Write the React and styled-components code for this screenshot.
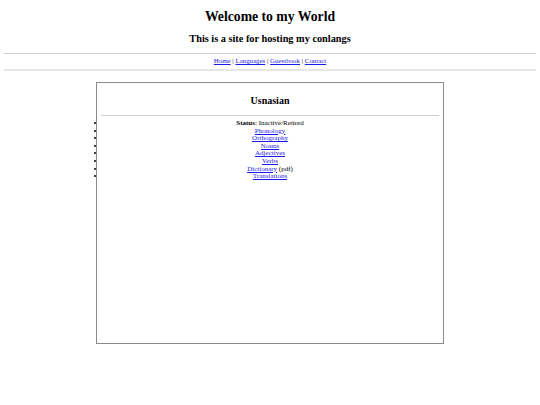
import React from "react";
import styled, { createGlobalStyle } from "styled-components";

const Global = createGlobalStyle`
  html, body { margin: 0; padding: 0; background: #fff; }
  body {
    margin: 4px;
    font-family: "Liberation Serif", "Times New Roman", serif;
    color: #000;
  }
`;

const Title = styled.h1`
  font-size: 13.7px;
  font-weight: bold;
  text-align: center;
  margin: 0;
  padding-top: 5px;
  line-height: 16px;
`;

const Subtitle = styled.h2`
  font-size: 10.3px;
  font-weight: bold;
  text-align: center;
  margin: 8px 0 0;
  line-height: 12px;
`;

const Rule = styled.hr`
  border: none;
  height: ${(p) => p.$thick}px;
  background: ${(p) => p.$color};
  margin: ${(p) => p.$mt}px 0 0;
`;

const Nav = styled.div`
  font-size: 6.9px;
  text-align: center;
  line-height: 8px;
  margin-top: 3px;
`;

const Link = styled.a`
  color: #1a1aee;
  text-decoration: underline;
`;

const Box = styled.div`
  width: 338px;
  height: 260px;
  margin: 11px auto 0;
  border: 1px solid #8a8a8a;
  padding: 0 4px;
`;

const BoxTitle = styled.h3`
  font-size: 10px;
  font-weight: bold;
  text-align: center;
  margin: 12px 0 0;
  line-height: 12px;
`;

const List = styled.ul`
  list-style: disc outside;
  margin: 4px 0 0;
  padding: 0 4px;
  font-size: 7px;
  line-height: 7.6px;
  text-align: center;
`;

const Item = styled.li``;

const Sep = () => <> | </>;

export default function App() {
  return (
    <>
      <Global />
      <Title>Welcome to my World</Title>
      <Subtitle>This is a site for hosting my conlangs</Subtitle>
      <Rule $thick={1} $color="#cfcfcf" $mt={8} />
      <Nav>
        <Link href="#">Home</Link>
        <Sep />
        <Link href="#">Languages</Link>
        <Sep />
        <Link href="#">Guestbook</Link>
        <Sep />
        <Link href="#">Contact</Link>
      </Nav>
      <Rule $thick={2} $color="#e6e6e6" $mt={4} />
      <Box>
        <BoxTitle>Usnasian</BoxTitle>
        <Rule $thick={1} $color="#cfcfcf" $mt={8} />
        <List>
          <Item>
            <b>Status</b>: Inactive/Retired
          </Item>
          <Item>
            <Link href="#">Phonology</Link>
          </Item>
          <Item>
            <Link href="#">Orthography</Link>
          </Item>
          <Item>
            <Link href="#">Nouns</Link>
          </Item>
          <Item>
            <Link href="#">Adjectives</Link>
          </Item>
          <Item>
            <Link href="#">Verbs</Link>
          </Item>
          <Item>
            <Link href="#">Dictionary</Link> (pdf)
          </Item>
          <Item>
            <Link href="#">Translations</Link>
          </Item>
        </List>
      </Box>
    </>
  );
}
